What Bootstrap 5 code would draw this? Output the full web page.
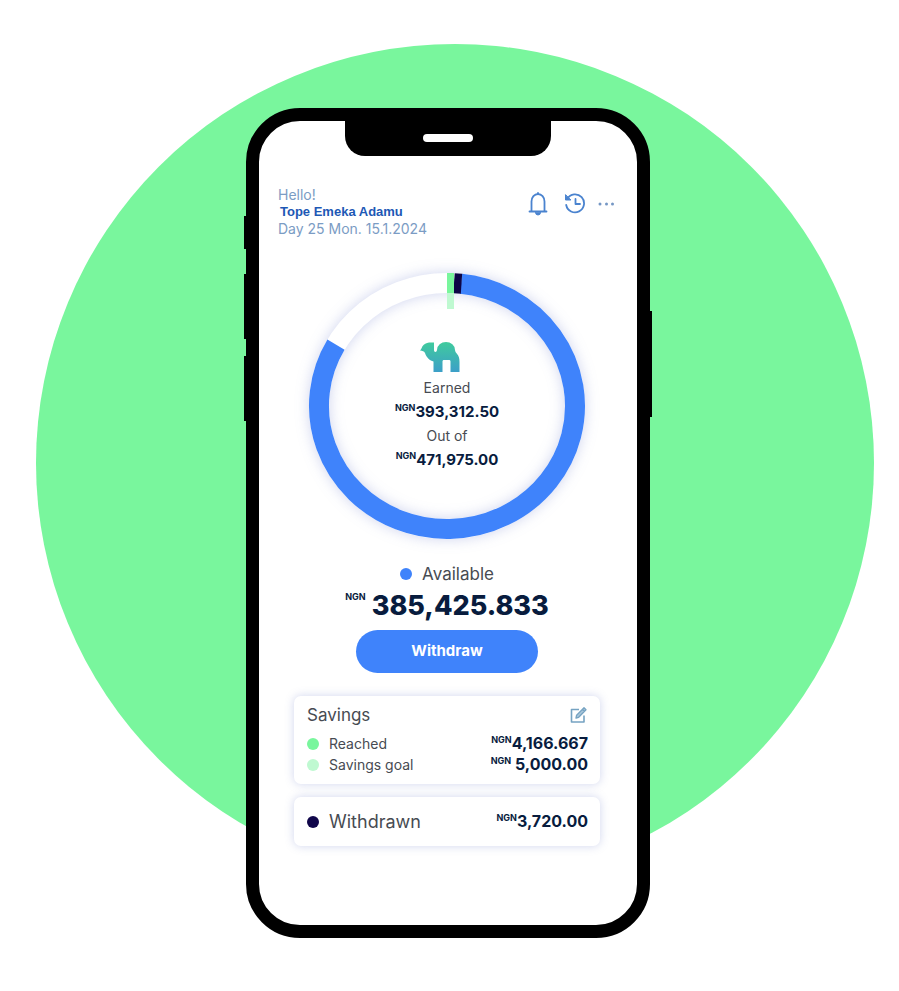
<!DOCTYPE html>
<html lang="en">
<head>
<meta charset="utf-8">
<meta name="viewport" content="width=device-width, initial-scale=1">
<title>Savings overview</title>
<link href="https://cdn.jsdelivr.net/npm/bootstrap@5.3.0/dist/css/bootstrap.min.css" rel="stylesheet">
<style>
  :root { --ink: #081c3e; --blue: #3f83fb; --mint: #79f69d; --mint-soft: #bff9d1; --navy: #10064a; }
  body { background: #fff; font-family: Inter, "Liberation Sans", sans-serif; color: #474b52; }
  .stage { padding: 108px 3px 53px 0; min-height: 100vh; isolation: isolate; }
  .backdrop-disc { position: absolute; z-index: -1; top: 44px; left: 50%; width: 838px; aspect-ratio: 1; margin-left: -414px; border-radius: 50%; background: var(--mint); }
  .phone { width: 404px; max-width: 100%; border: 13px solid #000; border-radius: 54px; background: #fff; }
  .side-key { position: absolute; width: 3px; background: #000; }
  .key-mute { left: -15px; top: 95px; height: 33px; }
  .key-up { left: -15px; top: 153px; height: 65px; }
  .key-down { left: -15px; top: 235px; height: 65px; }
  .key-power { right: -15px; top: 190px; height: 106px; }
  .notch { width: 206px; height: 35px; border-radius: 0 0 20px 20px; background: #000; padding-bottom: 2px; }
  .speaker { width: 50px; height: 8px; background: #fff; }
  .app-head { padding: 30px 21px 0 19px; line-height: 17px; font-size: 14px; color: #7b9cc4; }
  .user-name { font: bold 13px/17px "Liberation Sans", Arial, sans-serif; color: #1d58b5; padding-left: 2px; }
  .icon-btn { line-height: 0; color: #4a83cf; }
  .donut { width: 276px; height: 266px; margin: 36px 2px 0 0; padding-top: 69px; isolation: isolate; }
  .donut-chart { position: absolute; inset: 0; overflow: visible; z-index: -1; }
  .donut-ring { filter: drop-shadow(0 0 7px rgba(70, 90, 190, .26)); }
  .camel { margin: 0 14px 4px 0; }
  .donut-text { font-size: 14px; line-height: 24px; }
  .donut-text .amount { font-size: 15px; }
  .amount { color: var(--ink); font-weight: 700; white-space: nowrap; }
  .amount sup { font-size: 9px; top: -6px; line-height: 0; vertical-align: baseline; }
  .tick { width: 12px; height: 12px; border-radius: 50%; flex: none; }
  .tick-blue { background: var(--blue); }
  .tick-mint { background: var(--mint); }
  .tick-soft { background: var(--mint-soft); }
  .tick-navy { background: var(--navy); }
  .available { margin-top: 24px; gap: 10px; font-size: 17px; line-height: 22px; }
  .balance { font-size: 27px; font-weight: 800; line-height: 42px; }
  .balance sup { top: -15px; margin-right: 6px; font-weight: 700; }
  .summary { margin-right: 2px; }
  .btn-withdraw { width: 182px; height: 43px; margin-top: 3px; background: var(--blue); color: #fff; font-size: 15px; font-weight: 700; }
  .btn-withdraw:hover { background: #2f71e6; color: #fff; }
  .panels { padding: 23px 37px 79px 35px; gap: 13px; }
  .panel { border-radius: 7px; background: #fff; box-shadow: 0 0 10px rgba(80, 100, 190, .27); padding: 9px 12px 9px 13px; }
  .panel-title { font-size: 17px; line-height: 20px; margin-bottom: 8px; }
  .panel-row { gap: 10px; font-size: 14px; line-height: 21px; }
  .panel-row .amount { font-size: 16px; }
  .panel-row sup { top: -6px; }
  .panel-lg { padding-top: 14px; padding-bottom: 14px; }
  .panel-lg .panel-row { font-size: 18px; }
</style>
</head>
<body>
<main class="stage position-relative d-flex justify-content-center align-items-start overflow-hidden">
  <div class="backdrop-disc"></div>
  <div class="phone position-relative d-flex flex-column">
    <span class="side-key key-mute"></span><span class="side-key key-up"></span><span class="side-key key-down"></span><span class="side-key key-power"></span>
    <div class="notch align-self-center d-flex justify-content-center align-items-center"><span class="speaker rounded-pill"></span></div>

    <header class="app-head d-flex justify-content-between align-items-start">
      <div>
        <div>Hello!</div>
        <div class="user-name">Tope Emeka Adamu</div>
        <div>Day 25 Mon. 15.1.2024</div>
      </div>
      <div class="d-flex align-items-center pt-1">
        <button type="button" class="icon-btn btn border-0 p-0 me-3" aria-label="Notifications">
          <svg width="20" height="26" viewBox="0 0 20 26" fill="none" stroke="currentColor" stroke-width="1.8" stroke-linejoin="round" stroke-linecap="round"><path d="M1.500 21.500h17M3.500 21V11.500a6.500 7.500 0 0 1 13 0V21M10 3.500V3"/><path d="M7.500 22.500a2.500 2.500 0 0 0 5 0z" fill="currentColor" stroke-width="1"/></svg>
        </button>
        <button type="button" class="icon-btn btn border-0 p-0" aria-label="History">
          <svg width="22" height="22" viewBox="0 0 22 22" fill="none" stroke="currentColor" stroke-width="1.8" stroke-linecap="round" stroke-linejoin="round"><path d="M3.300 6.800A9 9 0 1 1 2.200 13M11.500 7v5h4.500"/><path d="M1.500 3v5h5z" fill="currentColor" stroke-width="1"/></svg>
        </button>
        <button type="button" class="icon-btn btn border-0 p-0 ms-2 ps-1" aria-label="More">
          <svg width="18" height="6" viewBox="0 0 18 6" fill="#7597c4"><circle cx="2" cy="4" r="1.500"/><circle cx="8.500" cy="4" r="1.500"/><circle cx="14.500" cy="4" r="1.500"/></svg>
        </button>
      </div>
    </header>

    <section class="donut position-relative align-self-center d-flex flex-column align-items-center" aria-label="Earnings progress">
      <svg class="donut-chart" width="276" height="266" viewBox="0 0 276 266" fill="none" stroke-width="20">
        <ellipse class="donut-ring" cx="138" cy="133" rx="128" ry="123" stroke="#fff"/>
        <path d="M152 10.700A128 123 0 1 1 27 71.700" stroke="#3f83fb"/>
        <path d="M145 10.200L152.500 10.700" stroke="#0c0546"/>
        <path d="M138 0h7v20h-7z" fill="#79f69d" stroke="none"/>
        <path d="M138 20h7v16h-7z" fill="#bff9d1" stroke="none"/>
      </svg>
      <svg width="40" height="30" viewBox="0 0 40 30" class="camel" aria-hidden="true">
        <defs><linearGradient id="camelFill" x1="0" y1="0" x2="0" y2="1"><stop offset="0" stop-color="#40cb9d"/><stop offset="1" stop-color="#3c9fc8"/></linearGradient></defs>
        <path fill="url(#camelFill)" d="M0 8.500C1.500 7.500 1.500 5 3.500 3C6.500 0 10 .5 14 .5V8c0 1.200.6 2 1.400 2s1.400-.8 1.600-2A9 8 0 0 1 35 8C35.300 9.500 35.500 10 36.500 11.200C39 14 39.500 16 39.500 20v10H30.500V19.500c0-1-.5-1.500-1.500-1.500h-5c-1 0-1.500.5-1.500 1.500V30H13.500V19.500C10 18.500 6.500 16 5 11C4 9 2.500 9 0 8.500z"/>
      </svg>
      <div class="donut-text text-center">
        <div>Earned</div>
        <div class="amount"><sup>NGN</sup>393,312.50</div>
        <div>Out of</div>
        <div class="amount"><sup>NGN</sup>471,975.00</div>
      </div>
    </section>

    <section class="summary d-flex flex-column align-items-center">
      <div class="available d-flex align-items-center"><span class="tick tick-blue"></span>Available</div>
      <div class="balance amount"><sup>NGN</sup>385,425.833</div>
      <button type="button" class="btn btn-withdraw rounded-pill border-0 p-0">Withdraw</button>
    </section>

    <section class="panels d-flex flex-column">
      <div class="panel">
        <div class="panel-title d-flex justify-content-between align-items-center">Savings
          <button type="button" class="icon-btn btn border-0 p-0" aria-label="Edit savings goal">
            <svg width="18" height="18" viewBox="0 0 18 18" fill="none" stroke="#76a3c2" stroke-width="1.600" stroke-linejoin="round"><path d="M9 3.500H1.500v12.500h12.500V9.500"/><path d="M6 12l.6-2.800L14 1.800l2 2L8.700 11.300zM12.500 3.500l2 2" fill="#a9c6da" stroke-width="1.300"/></svg>
          </button>
        </div>
        <div class="panel-row d-flex align-items-center"><span class="tick tick-mint"></span>Reached<span class="amount ms-auto"><sup>NGN</sup>4,166.667</span></div>
        <div class="panel-row d-flex align-items-center"><span class="tick tick-soft"></span>Savings goal<span class="amount ms-auto"><sup>NGN</sup> 5,000.00</span></div>
      </div>
      <div class="panel panel-lg">
        <div class="panel-row d-flex align-items-center"><span class="tick tick-navy"></span>Withdrawn<span class="amount ms-auto"><sup>NGN</sup>3,720.00</span></div>
      </div>
    </section>
  </div>
</main>
<script src="https://cdn.jsdelivr.net/npm/bootstrap@5.3.0/dist/js/bootstrap.bundle.min.js"></script>
</body>
</html>
